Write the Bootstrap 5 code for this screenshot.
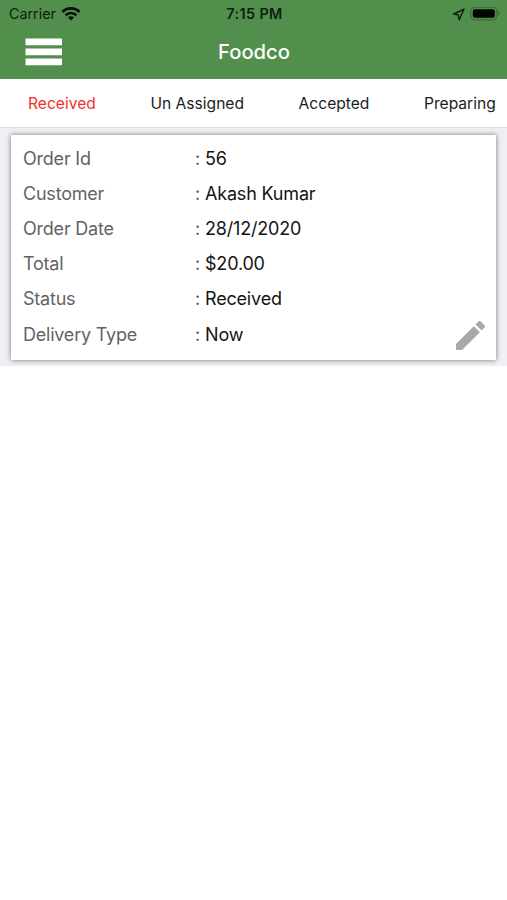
<!DOCTYPE html>
<html lang="en">
<head>
<meta charset="utf-8">
<meta name="viewport" content="width=device-width, initial-scale=1">
<title>Foodco</title>
<link href="https://cdn.jsdelivr.net/npm/bootstrap@5.3.0/dist/css/bootstrap.min.css" rel="stylesheet">
<style>
  body { font-family: Inter, "Liberation Sans", sans-serif; background: #fff; color: #111; overflow: hidden; }
  .app-header { background: #528f4c; height: 79px; }
  .status-bar { height: 27px; padding: 1px 7px 0 9px; font-size: 14.3px; color: #10200f; }
  .status-bar .clock { font-size: 14.4px; letter-spacing: .4px; font-weight: 600; }
  .title-bar { height: 50px; padding-left: 25px; }
  .brand { font-size: 20.2px; font-weight: 550; padding-top: 1px; }
  .menu-btn { width: 37px; height: 28px; }
  .tabs { height: 49px; padding: 2px 0 0 28px; gap: 54.6px; border-bottom: 1px solid #dedee1; font-size: 15.6px; }
  .tabs .nav-link { color: #1c1c1c; }
  .tabs .nav-link.active { color: #f3302b; }
  .orders { background: #efeff4; padding: 7px 11px 6px; }
  .order-card { height: 225px; padding: 6px 12px; box-shadow: 0 0 5px rgba(0,0,0,.5); font-size: 18px; letter-spacing: -.18px; }
  .order-line { height: 35.1px; }
  .order-line dt { width: 172px; color: #636363; letter-spacing: -.22px; }
  .order-line dd { color: #141414; }
  .order-line .sep { width: 10px; color: #555; }
  .edit-btn { right: 11px; bottom: 10px; width: 29px; height: 29px; }
</style>
<script src="https://cdn.jsdelivr.net/npm/bootstrap@5.3.0/dist/js/bootstrap.bundle.min.js"></script>
</head>
<body>
<header class="app-header">
  <div class="status-bar row g-0 align-items-center lh-1">
    <div class="col d-flex align-items-center">
      <span>Carrier</span>
      <svg class="ms-1" width="21" height="15" viewBox="-1 0 21 15" fill="none" stroke="#081207" stroke-width="2.7">
        <path d="M1.4 5A12.2 12.2 0 0 1 18.6 5M4.6 8.2A7.7 7.7 0 0 1 15.4 8.2"/>
        <path d="M10 13.6 7 10.6A4.3 4.3 0 0 1 13 10.6Z" fill="#081207" stroke="none"/>
      </svg>
    </div>
    <div class="col-auto clock">7:15 PM</div>
    <div class="col d-flex justify-content-end align-items-center">
      <svg width="13" height="13" viewBox="0 0 13 13" fill="none" stroke="#10200f" stroke-width="1.5" stroke-linejoin="round"><path d="M12 1.2 1.6 6 6.2 6.8 7.2 11.7Z"/></svg>
      <svg class="ms-1" width="31" height="15" viewBox="-1 1 31 15"><rect x=".8" y="1.2" width="26" height="12.6" rx="4" fill="none" stroke="#3a6b36" stroke-width="1.2"/><rect x="2.8" y="3.2" width="22" height="8.6" rx="2" fill="#020502"/><path d="M28.2 5.2q3 2.3 0 4.6Z" fill="#3a6b36"/></svg>
    </div>
  </div>
  <div class="title-bar row g-0 align-items-center">
    <div class="col">
      <button class="menu-btn btn p-0 border-0 d-flex" aria-label="Menu">
        <svg width="37" height="28" viewBox="0 0 37 28" fill="#fff"><path d="M.5 .6h36.5v6.6H.5zM.5 10.6h36.5v6.6H.5zM.5 20.6h36.5v6.6H.5z"/></svg>
      </button>
    </div>
    <div class="brand col-auto text-white">Foodco</div>
    <div class="col pe-4"></div>
  </div>
</header>
<nav class="tabs nav flex-nowrap align-items-center text-nowrap overflow-hidden">
  <a class="nav-link p-0 active" href="#">Received</a>
  <a class="nav-link p-0" href="#">Un Assigned</a>
  <a class="nav-link p-0" href="#">Accepted</a>
  <a class="nav-link p-0" href="#">Preparing</a>
</nav>
<main class="orders">
  <div class="order-card card border-0 rounded-0">
    <dl class="m-0">
      <div class="order-line d-flex align-items-center"><dt class="fw-normal">Order Id</dt><span class="sep">:</span><dd class="m-0">56</dd></div>
      <div class="order-line d-flex align-items-center"><dt class="fw-normal">Customer</dt><span class="sep">:</span><dd class="m-0">Akash Kumar</dd></div>
      <div class="order-line d-flex align-items-center"><dt class="fw-normal">Order Date</dt><span class="sep">:</span><dd class="m-0">28/12/2020</dd></div>
      <div class="order-line d-flex align-items-center"><dt class="fw-normal">Total</dt><span class="sep">:</span><dd class="m-0">$20.00</dd></div>
      <div class="order-line d-flex align-items-center"><dt class="fw-normal">Status</dt><span class="sep">:</span><dd class="m-0">Received</dd></div>
      <div class="order-line d-flex align-items-center"><dt class="fw-normal">Delivery Type</dt><span class="sep">:</span><dd class="m-0">Now</dd></div>
    </dl>
    <button class="edit-btn btn p-0 border-0 position-absolute d-flex" aria-label="Edit">
      <svg width="29" height="29" viewBox="3 3 18 18" fill="#a8a8a8"><path d="M3 17.46v3.04c0 .28.22.5.5.5h3.04c.13 0 .26-.05.35-.15L17.81 9.94l-3.75-3.75L3.15 17.1c-.1.1-.15.22-.15.36zM20.71 7.04c.39-.39.39-1.02 0-1.41l-2.34-2.34a.9959.9959 0 0 0-1.41 0l-1.83 1.83 3.75 3.75 1.83-1.83z"/></svg>
    </button>
  </div>
</main>
</body>
</html>
